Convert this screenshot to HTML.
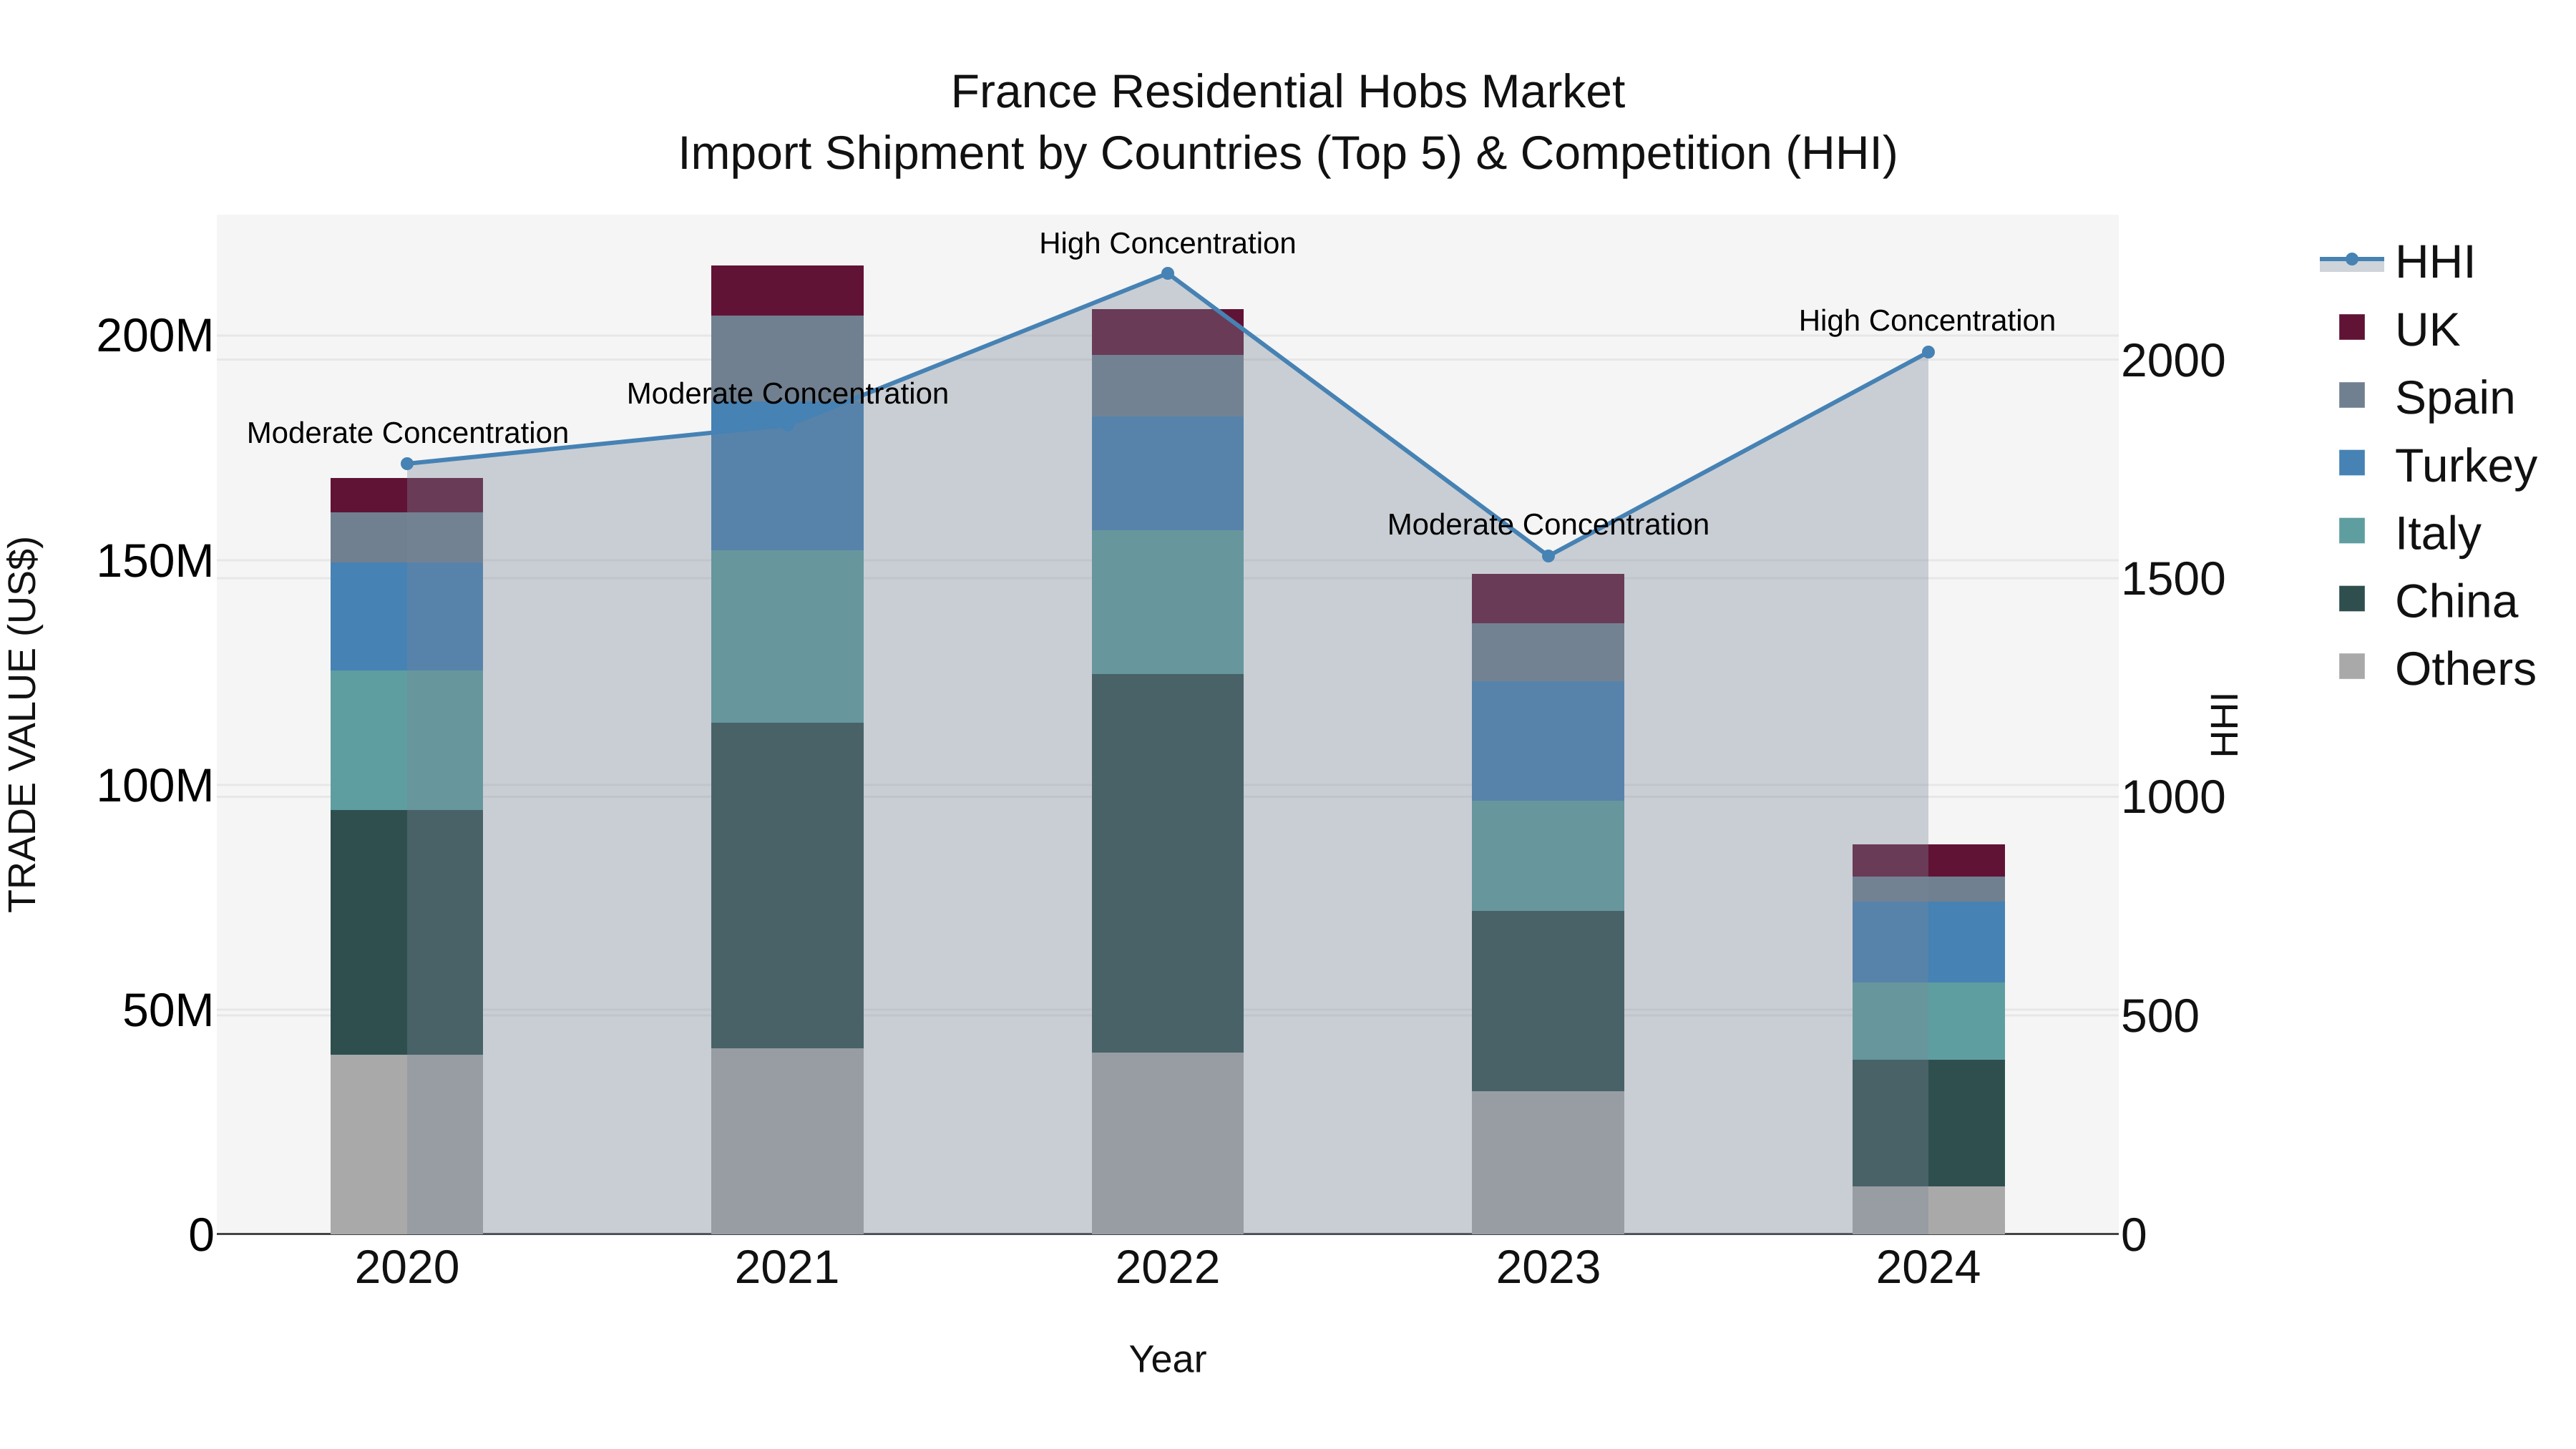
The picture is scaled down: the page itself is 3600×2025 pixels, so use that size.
<!DOCTYPE html>
<html>
<head>
<meta charset="utf-8">
<style>
html,body{margin:0;padding:0;background:#fff;width:3600px;height:2025px;overflow:hidden}
svg{display:block;position:absolute;left:0;top:0}
text{font-family:"Liberation Sans",Arial,sans-serif;text-rendering:geometricPrecision}
</style>
</head>
<body>
<svg width="3600" height="2025" viewBox="0 0 3600 2025" xmlns="http://www.w3.org/2000/svg">
<rect width="3600" height="2025" fill="#ffffff"/>
<rect x="303" y="300" width="2658" height="1425" fill="#f5f5f5"/>

<!-- gridlines -->
<g stroke="#e7e7e7" stroke-width="3" fill="none">
<path d="M303 1411H2961M303 1097H2961M303 783H2961M303 469H2961"/>
<path d="M303 1419H2961M303 1113.500H2961M303 808H2961M303 502.500H2961"/>
</g>
<!-- axis line -->
<rect x="303" y="1723" width="2658" height="3" fill="#444444"/>

<!-- bars -->
<g shape-rendering="crispEdges">
<!-- 2020 -->
<rect x="462" y="1474" width="213" height="251" fill="#A9A9A9"/>
<rect x="462" y="1132" width="213" height="342" fill="#2F4F4F"/>
<rect x="462" y="937" width="213" height="195" fill="#5F9EA0"/>
<rect x="462" y="786" width="213" height="151" fill="#4682B4"/>
<rect x="462" y="716" width="213" height="70" fill="#708090"/>
<rect x="462" y="668" width="213" height="48" fill="#611335"/>
<!-- 2021 -->
<rect x="994" y="1465" width="213" height="260" fill="#A9A9A9"/>
<rect x="994" y="1010" width="213" height="455" fill="#2F4F4F"/>
<rect x="994" y="769" width="213" height="241" fill="#5F9EA0"/>
<rect x="994" y="561" width="213" height="208" fill="#4682B4"/>
<rect x="994" y="441" width="213" height="120" fill="#708090"/>
<rect x="994" y="371" width="213" height="70" fill="#611335"/>
<!-- 2022 -->
<rect x="1526" y="1471" width="212" height="254" fill="#A9A9A9"/>
<rect x="1526" y="942" width="212" height="529" fill="#2F4F4F"/>
<rect x="1526" y="741" width="212" height="201" fill="#5F9EA0"/>
<rect x="1526" y="582" width="212" height="159" fill="#4682B4"/>
<rect x="1526" y="496" width="212" height="86" fill="#708090"/>
<rect x="1526" y="432" width="212" height="64" fill="#611335"/>
<!-- 2023 -->
<rect x="2057" y="1525" width="213" height="200" fill="#A9A9A9"/>
<rect x="2057" y="1273" width="213" height="252" fill="#2F4F4F"/>
<rect x="2057" y="1119" width="213" height="154" fill="#5F9EA0"/>
<rect x="2057" y="952" width="213" height="167" fill="#4682B4"/>
<rect x="2057" y="871" width="213" height="81" fill="#708090"/>
<rect x="2057" y="802" width="213" height="69" fill="#611335"/>
<!-- 2024 -->
<rect x="2589" y="1658" width="213" height="67" fill="#A9A9A9"/>
<rect x="2589" y="1481" width="213" height="177" fill="#2F4F4F"/>
<rect x="2589" y="1373" width="213" height="108" fill="#5F9EA0"/>
<rect x="2589" y="1260" width="213" height="113" fill="#4682B4"/>
<rect x="2589" y="1225" width="213" height="35" fill="#708090"/>
<rect x="2589" y="1180" width="213" height="45" fill="#611335"/>
</g>

<!-- area -->
<polygon points="569,648 1101,594 1632,382 2164,777 2695,492 2695,1725 569,1725" fill="rgb(119,136,153)" fill-opacity="0.35"/>
<polyline points="569,648 1101,594 1632,382 2164,777 2695,492" fill="none" stroke="#4682B4" stroke-width="6" stroke-linejoin="round"/>
<g fill="#4682B4">
<circle cx="569" cy="648" r="9"/>
<circle cx="1101" cy="594" r="9"/>
<circle cx="1632" cy="382" r="9"/>
<circle cx="2164" cy="777" r="9"/>
<circle cx="2695" cy="492" r="9"/>
</g>

<!-- annotations -->
<g font-size="42" fill="#000000" text-anchor="middle">
<text x="570" y="619">Moderate Concentration</text>
<text x="1101" y="564">Moderate Concentration</text>
<text x="1632" y="354">High Concentration</text>
<text x="2164" y="747">Moderate Concentration</text>
<text x="2693.500" y="462">High Concentration</text>
</g>

<!-- title -->
<g font-size="66" fill="#111111" text-anchor="middle">
<text x="1800" y="150">France Residential Hobs Market</text>
<text x="1800" y="236">Import Shipment by Countries (Top 5) &amp; Competition (HHI)</text>
</g>

<!-- left ticks -->
<g font-size="66" fill="#000000" text-anchor="end">
<text x="299.500" y="491">200M</text>
<text x="299.500" y="806">150M</text>
<text x="299.500" y="1120">100M</text>
<text x="299.500" y="1434">50M</text>
<text x="300" y="1748">0</text>
</g>
<!-- right ticks -->
<g font-size="66" fill="#111111" text-anchor="start">
<text x="2964" y="526">2000</text>
<text x="2964" y="831">1500</text>
<text x="2964" y="1136">1000</text>
<text x="2964" y="1442">500</text>
<text x="2964" y="1748">0</text>
</g>
<!-- x ticks -->
<g font-size="66" fill="#111111" text-anchor="middle">
<text x="569" y="1793">2020</text>
<text x="1100" y="1793">2021</text>
<text x="1632" y="1793">2022</text>
<text x="2164" y="1793">2023</text>
<text x="2695" y="1793">2024</text>
</g>
<!-- axis titles -->
<text x="1632" y="1917.500" font-size="54" fill="#111111" text-anchor="middle">Year</text>
<text transform="translate(49,1012.500) rotate(-90)" font-size="54" fill="#111111" text-anchor="middle">TRADE VALUE (US$)</text>
<text transform="translate(3127,1013) rotate(-90)" font-size="54" fill="#111111" text-anchor="middle">HHI</text>

<!-- legend -->
<rect x="3242" y="362" width="90" height="18" fill="#cfd4da"/>
<rect x="3242" y="359" width="90" height="6" fill="#4682B4"/>
<circle cx="3287" cy="362" r="9" fill="#4682B4"/>
<g stroke="#ffffff" stroke-opacity="0.35" stroke-width="1">
<rect x="3269" y="439" width="36" height="36" fill="#611335"/>
<rect x="3269" y="534" width="36" height="36" fill="#708090"/>
<rect x="3269" y="628.500" width="36" height="36" fill="#4682B4"/>
<rect x="3269" y="723.500" width="36" height="36" fill="#5F9EA0"/>
<rect x="3269" y="818.500" width="36" height="36" fill="#2F4F4F"/>
<rect x="3269" y="913" width="36" height="36" fill="#A9A9A9"/>
</g>
<g font-size="66" fill="#111111">
<text x="3347" y="388">HHI</text>
<text x="3347" y="483">UK</text>
<text x="3347" y="578">Spain</text>
<text x="3347" y="673">Turkey</text>
<text x="3347" y="767.500">Italy</text>
<text x="3347" y="862.500">China</text>
<text x="3347" y="957">Others</text>
</g>
</svg>
</body>
</html>
